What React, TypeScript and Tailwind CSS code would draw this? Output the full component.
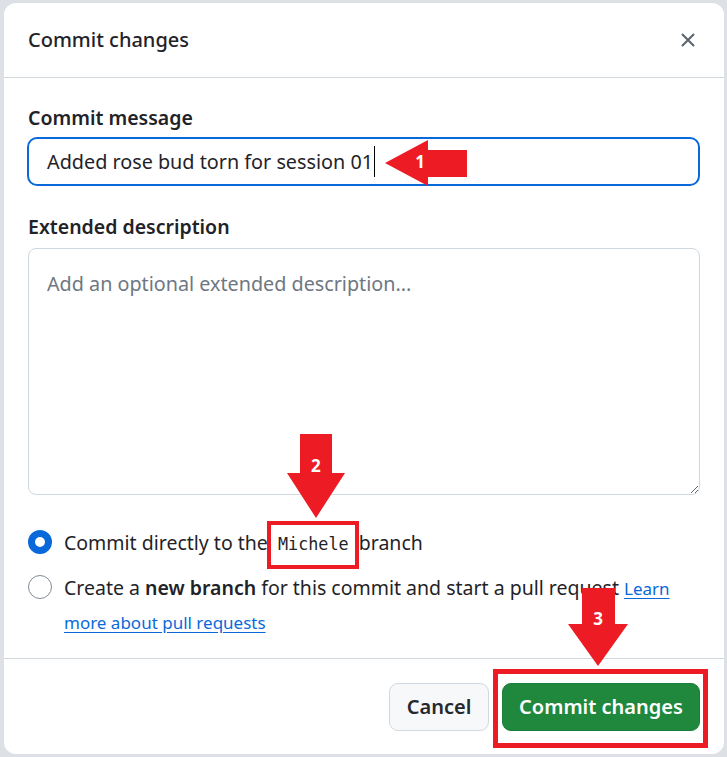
import React from "react";

const font = { fontFamily: '"Noto Sans", "Liberation Sans", sans-serif' };

function ArrowLeft({ n }: { n: string }) {
  return (
    <div className="absolute w-[82px] h-[46px]">
      <svg width="82" height="46" viewBox="0 0 82 46" className="absolute inset-0">
        <polygon points="0,23 43,0 43,10 82,10 82,37 43,37 43,46" fill="#ed1c24" />
      </svg>
      <span className="absolute left-[28px] top-[10px] w-[14px] text-center text-[17px] font-bold text-white leading-[24px]">{n}</span>
    </div>
  );
}

function ArrowDown({ w, h, sl, sr, hy }: { w: number; h: number; sl: number; sr: number; hy: number }) {
  const pts = `${sl},0 ${sr},0 ${sr},${hy} ${w},${hy} ${w / 2},${h} 0,${hy} ${sl},${hy}`;
  return (
    <svg width={w} height={h} viewBox={`0 0 ${w} ${h}`} className="absolute inset-0">
      <polygon points={pts} fill="#ed1c24" />
    </svg>
  );
}

export default function App() {
  return (
    <div className="relative w-[727px] h-[757px] overflow-hidden bg-[#dde1e6]" style={font}>
      <div className="absolute left-[4px] top-[3px] w-[720px] h-[751px] bg-white rounded-[12px] flex flex-col text-[#1f2328]">
        {/* header */}
        <div className="h-[75px] flex items-center justify-between pl-6 pr-[28px] border-b border-[#d1d9e0] shrink-0">
          <h1 className="text-[20px] leading-[30px] font-medium">Commit changes</h1>
          <svg width="16" height="16" viewBox="0 0 16 16" className="text-[#59636e]">
            <path d="M2.5 2.5 L13.5 13.5 M13.5 2.5 L2.5 13.5" stroke="currentColor" strokeWidth="2" strokeLinecap="round" />
          </svg>
        </div>
        {/* body */}
        <div className="flex-1 px-6 pt-[25px] flex flex-col">
          <label className="text-[19.5px] leading-[30px] font-semibold">Commit message</label>
          <div className="relative mt-[4px] -ml-px w-[673px] h-[49px] border-2 border-[#0969da] rounded-[10px] flex items-center pl-[18px]">
            <span className="text-[19.8px] leading-[30px] text-[#1f2328]">Added rose bud torn for session 01</span>
            <span className="ml-px w-px h-[31px] bg-black" />
            <div className="absolute left-[356px] top-[1px]">
              <ArrowLeft n="1" />
            </div>
          </div>
          <label className="mt-[26px] text-[19.5px] leading-[30px] font-semibold">Extended description</label>
          <textarea
            className="mt-[6px] w-full h-[247px] border border-[#d1d9e0] rounded-[8px] px-[18px] pt-[20px] text-[19.75px] leading-[30px] placeholder:text-[#6e7781] outline-none"
            placeholder="Add an optional extended description..."
            style={font}
          />
          <div className="mt-[31px] flex items-start gap-[12px]">
            <span className="mt-[4px] w-[24px] h-[24px] rounded-full border-[7px] border-[#0969da] bg-white shrink-0" />
            <span className="text-[19.5px] leading-[33px]">
              Commit directly to the{" "}
              <span className="relative inline-block px-[5px]">
                <code className="text-[16.8px]" style={{ fontFamily: '"DejaVu Sans Mono", "Liberation Mono", monospace' }}>Michele</code>
                <span className="absolute left-[-6px] right-[-5px] top-[-5px] bottom-[-8px] border-4 border-[#ed1c24]" />
                <div className="absolute left-[14px] top-[-92px] w-[58px] h-[84px]">
                  <ArrowDown w={58} h={84} sl={13} sr={45} hy={39} />
                  <span className="absolute left-0 top-[20px] w-[58px] text-center text-[17px] font-bold text-white leading-[24px]">2</span>
                </div>
              </span>{" "}
              branch
            </span>
          </div>
          <div className="mt-[10px] flex items-start gap-[12px]">
            <span className="mt-[4px] w-[24px] h-[24px] rounded-full border-[1.5px] border-[#818b98] bg-white shrink-0" />
            <span className="text-[19.5px] leading-[33px]">
              Create a <b className="font-semibold">new branch</b> for this commit and start a pull request{" "}
              <a className="text-[17px] text-[#0969da] underline underline-offset-[3px]">Learn more about pull requests</a>
            </span>
          </div>
        </div>
        {/* footer */}
        <div className="h-[96px] shrink-0 border-t border-[#d1d9e0] flex items-center justify-end gap-[13px] px-6">
          <button className="w-[100px] h-[48px] rounded-[9px] border border-[#d1d9e0] bg-[#f6f8fa] text-[20px] font-semibold text-[#25292e]">
            Cancel
          </button>
          <div className="relative">
            <button className="w-[198px] h-[48px] rounded-[9px] bg-[#1f883d] border border-[#1a7f37] text-[20px] font-semibold text-white">
              Commit changes
            </button>
            <span className="absolute left-[-9px] right-[-8px] top-[-14px] bottom-[-17px] border-[5px] border-[#ed1c24]" />
            <div className="absolute left-[66px] top-[-95px] w-[60px] h-[78px]">
              <ArrowDown w={60} h={78} sl={14} sr={47} hy={36} />
              <span className="absolute left-0 top-[19px] w-[60px] text-center text-[17px] font-bold text-white leading-[24px]">3</span>
            </div>
          </div>
        </div>
      </div>
    </div>
  );
}
